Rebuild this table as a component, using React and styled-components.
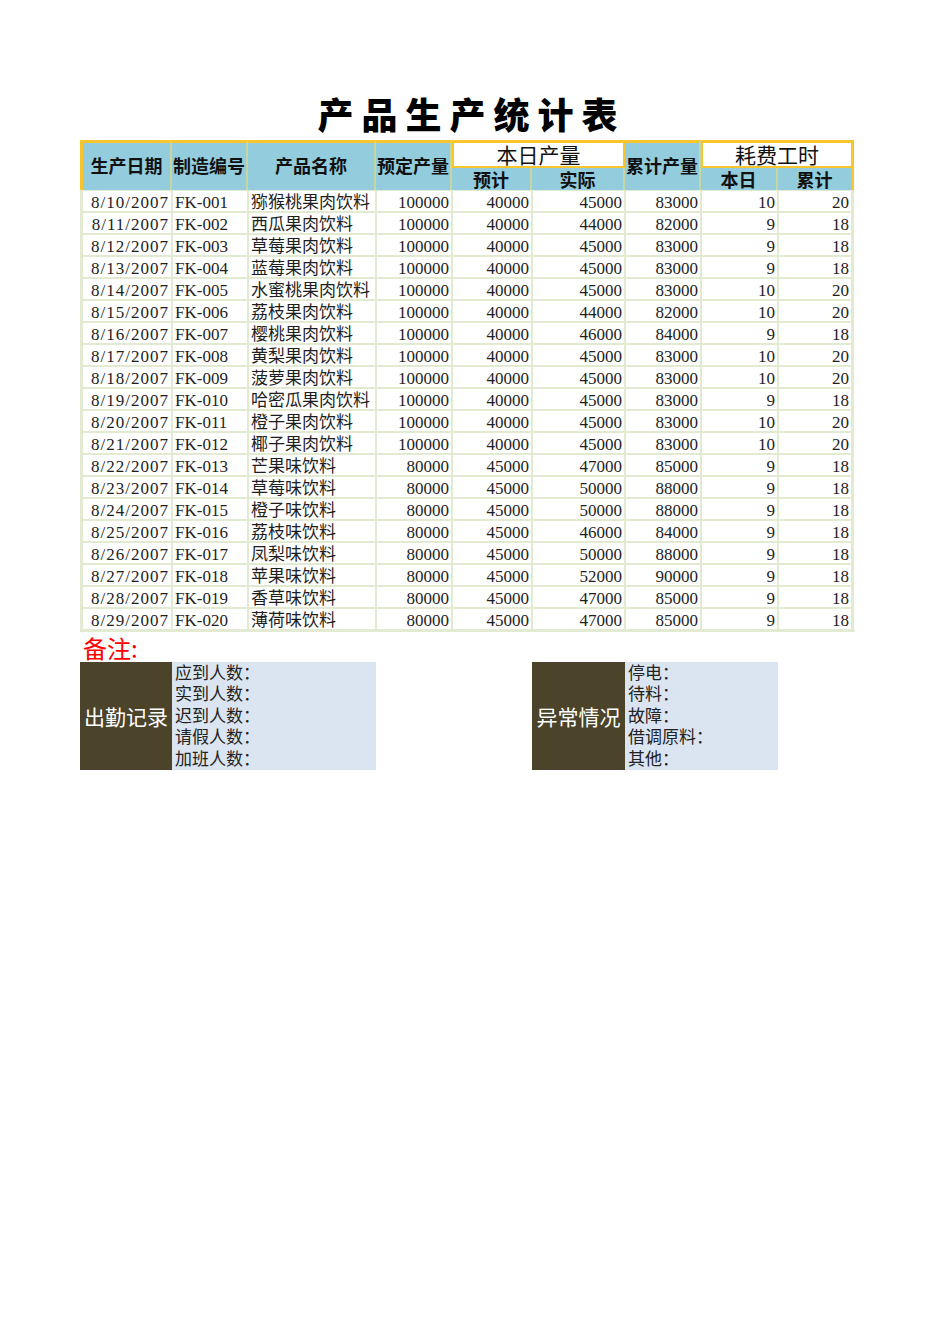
import styled, { createGlobalStyle } from "styled-components";

const rows = [
	["8/10/2007", "FK-001", "猕猴桃果肉饮料", 100000, 40000, 45000, 83000, 10, 20],
	["8/11/2007", "FK-002", "西瓜果肉饮料", 100000, 40000, 44000, 82000, 9, 18],
	["8/12/2007", "FK-003", "草莓果肉饮料", 100000, 40000, 45000, 83000, 9, 18],
	["8/13/2007", "FK-004", "蓝莓果肉饮料", 100000, 40000, 45000, 83000, 9, 18],
	["8/14/2007", "FK-005", "水蜜桃果肉饮料", 100000, 40000, 45000, 83000, 10, 20],
	["8/15/2007", "FK-006", "荔枝果肉饮料", 100000, 40000, 44000, 82000, 10, 20],
	["8/16/2007", "FK-007", "樱桃果肉饮料", 100000, 40000, 46000, 84000, 9, 18],
	["8/17/2007", "FK-008", "黄梨果肉饮料", 100000, 40000, 45000, 83000, 10, 20],
	["8/18/2007", "FK-009", "菠萝果肉饮料", 100000, 40000, 45000, 83000, 10, 20],
	["8/19/2007", "FK-010", "哈密瓜果肉饮料", 100000, 40000, 45000, 83000, 9, 18],
	["8/20/2007", "FK-011", "橙子果肉饮料", 100000, 40000, 45000, 83000, 10, 20],
	["8/21/2007", "FK-012", "椰子果肉饮料", 100000, 40000, 45000, 83000, 10, 20],
	["8/22/2007", "FK-013", "芒果味饮料", 80000, 45000, 47000, 85000, 9, 18],
	["8/23/2007", "FK-014", "草莓味饮料", 80000, 45000, 50000, 88000, 9, 18],
	["8/24/2007", "FK-015", "橙子味饮料", 80000, 45000, 50000, 88000, 9, 18],
	["8/25/2007", "FK-016", "荔枝味饮料", 80000, 45000, 46000, 84000, 9, 18],
	["8/26/2007", "FK-017", "凤梨味饮料", 80000, 45000, 50000, 88000, 9, 18],
	["8/27/2007", "FK-018", "苹果味饮料", 80000, 45000, 52000, 90000, 9, 18],
	["8/28/2007", "FK-019", "香草味饮料", 80000, 45000, 47000, 85000, 9, 18],
	["8/29/2007", "FK-020", "薄荷味饮料", 80000, 45000, 47000, 85000, 9, 18],
];

// column widths taken from the sheet
const COLS = "92px 76px 128px 76px 80px 93px 76px 77px 76px";

const attendance = ["应到人数：", "实到人数：", "迟到人数：", "请假人数：", "加班人数："];
const issues = ["停电：", "待料：", "故障：", "借调原料：", "其他："];

const App = () => {
	return (
		<Page>
			<GlobalStyle />
			<Title>产品生产统计表</Title>
			<Head>
				<HeadCell $col="1" $first>生产日期</HeadCell>
				<HeadCell $col="2">制造编号</HeadCell>
				<HeadCell $col="3">产品名称</HeadCell>
				<HeadCell $col="4">预定产量</HeadCell>
				<GroupCell $col="5 / 7">本日产量</GroupCell>
				<SubCell $col="5">预计</SubCell>
				<SubCell $col="6">实际</SubCell>
				<HeadCell $col="7">累计产量</HeadCell>
				<GroupCell $col="8 / 10" $last>耗费工时</GroupCell>
				<SubCell $col="8">本日</SubCell>
				<SubCell $col="9" $last>累计</SubCell>
			</Head>
			<Body>
				{rows.map((r, i) => (
					<Row key={r[1]} $bottom={i === rows.length - 1}>
						<Cell $align="right" $date $first>{r[0]}</Cell>
						<Cell>{r[1]}</Cell>
						<Cell>{r[2]}</Cell>
						{r.slice(3).map((n, j) => (
							<Cell key={j} $align="right" $last={j === 5}>
								{n}
							</Cell>
						))}
					</Row>
				))}
			</Body>
			<NoteTitle>备注:</NoteTitle>
			<Notes>
				<NoteLabel $col="1">出勤记录</NoteLabel>
				<NoteBody $col="2 / 4">
					{attendance.map((t) => (
						<NoteLine key={t}>{t}</NoteLine>
					))}
				</NoteBody>
				<NoteLabel $col="6">异常情况</NoteLabel>
				<NoteBody $col="7 / 9">
					{issues.map((t) => (
						<NoteLine key={t}>{t}</NoteLine>
					))}
				</NoteBody>
			</Notes>
		</Page>
	);
};

const GlobalStyle = createGlobalStyle`
	body {
		margin: 0;
		background: #fff;
	}
	* {
		box-sizing: border-box;
	}
`;

const Page = styled.div`
	padding: 94px 0 0 80px;
	width: 855px;
	font-family: "Liberation Serif", "Noto Sans CJK SC", serif;
	color: #1e1e1e;
`;

const Title = styled.h1`
	margin: 0 0 8px;
	width: 775px;
	height: 38px;
	line-height: 38px;
	text-align: center;
	font-family: "Noto Sans CJK SC", sans-serif;
	font-weight: 900;
	font-size: 36px;
	letter-spacing: 8px;
	padding-left: 8px;
	color: #000;
`;

const GOLD = "#f8c52f";
const OLIVE = "#c6d69c";
const LINE = "#e2ead2";

const Head = styled.div`
	display: grid;
	grid-template-columns: ${COLS};
	grid-template-rows: 28px 22px;
	width: 775px;
	font-family: "Noto Sans CJK SC", sans-serif;
	color: #111;
`;

const HeadCell = styled.div`
	grid-column: ${(p) => p.$col};
	grid-row: 1 / 3;
	display: flex;
	align-items: center;
	justify-content: center;
	padding-bottom: 4px;
	background: #93cddd;
	border-top: 3px solid ${GOLD};
	border-right: 2px solid ${OLIVE};
	border-left: ${(p) => (p.$first ? `3px solid ${GOLD}` : "none")};
	font-weight: 700;
	font-size: 18px;
	line-height: 22px;
	white-space: nowrap;
`;

const GroupCell = styled.div`
	grid-column: ${(p) => p.$col};
	grid-row: 1;
	display: flex;
	align-items: center;
	justify-content: center;
	background: #fff;
	border: 2px solid ${GOLD};
	border-top-width: 3px;
	border-right-width: ${(p) => (p.$last ? "3px" : "2px")};
	font-size: 21px;
	line-height: 21px;
	color: #111;
`;

const SubCell = styled.div`
	grid-column: ${(p) => p.$col};
	grid-row: 2;
	display: flex;
	align-items: center;
	justify-content: center;
	background: #93cddd;
	border-right: ${(p) => (p.$last ? `3px solid ${GOLD}` : `2px solid ${OLIVE}`)};
	font-weight: 700;
	font-size: 18px;
	line-height: 22px;
`;

const Body = styled.div`
	width: 775px;
`;

const Row = styled.div`
	display: grid;
	grid-template-columns: ${COLS};
	height: 22px;
	border-bottom: ${(p) => (p.$bottom ? `2px solid ${LINE}` : "none")};
	box-sizing: content-box;
`;

const Cell = styled.div`
	border: 1px solid ${LINE};
	border-left-width: ${(p) => (p.$first ? "3px" : "1px")};
	border-right-width: ${(p) => (p.$last ? "3px" : "1px")};
	padding: 1px 2px 0;
	text-align: ${(p) => p.$align || "left"};
	font-size: 17px;
	line-height: 21px;
	white-space: nowrap;
	overflow: hidden;
	letter-spacing: ${(p) => (p.$date ? "1px" : "0")};
`;

const NoteTitle = styled.div`
	height: 30px;
	line-height: 32px;
	padding-left: 3px;
	color: #f00;
	font-size: 24px;
	font-family: "Noto Sans CJK SC", serif;
`;

const Notes = styled.div`
	display: grid;
	grid-template-columns: ${COLS};
	width: 775px;
	height: 108px;
`;

const NoteLabel = styled.div`
	grid-column: ${(p) => p.$col};
	display: flex;
	align-items: center;
	justify-content: center;
	background: #4b432a;
	color: #fff;
	font-family: "Noto Sans CJK SC", sans-serif;
	font-size: 21px;
	white-space: nowrap;
`;

const NoteBody = styled.div`
	grid-column: ${(p) => p.$col};
	background: #dbe5f1;
	display: flex;
	flex-direction: column;
	padding: 1px 0 0 3px;
`;

const NoteLine = styled.div`
	height: 21.4px;
	line-height: 21.4px;
	font-size: 17px;
	color: #222;
`;

export default App;
